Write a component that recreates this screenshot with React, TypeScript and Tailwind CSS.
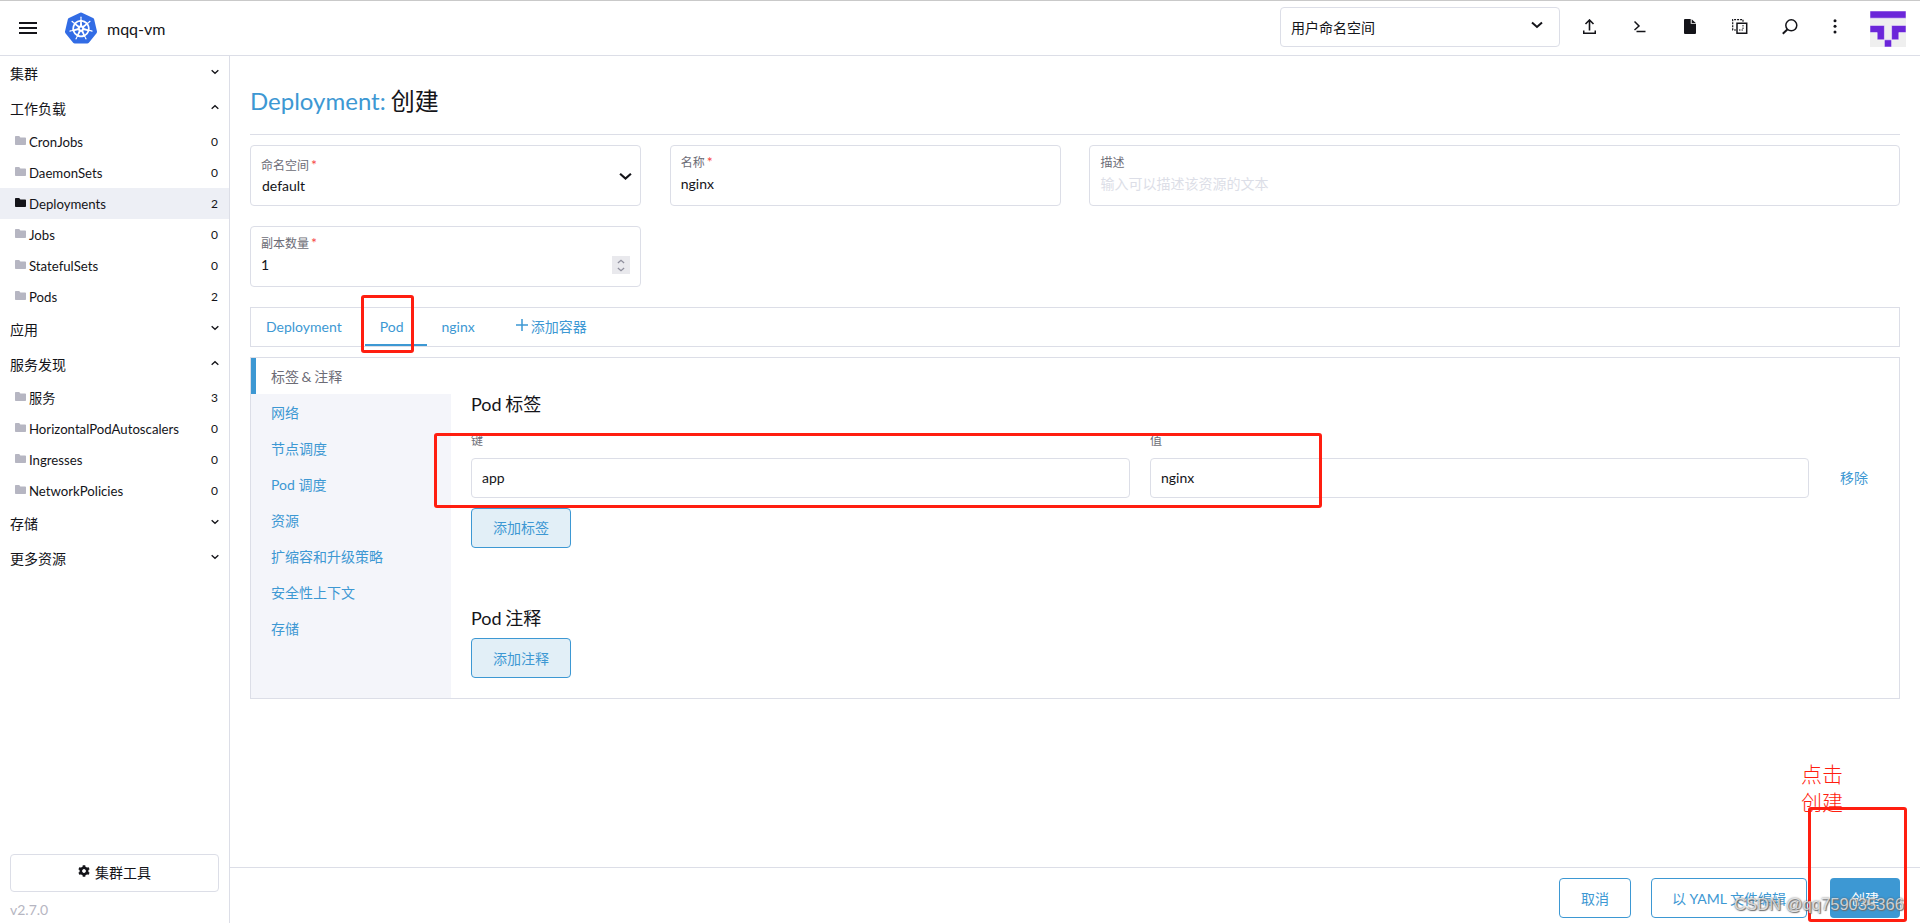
import { SiKubernetes } from "react-icons/si";

type NavItem = { label: string; count: number; active?: boolean };
type NavGroup = { label: string; items?: NavItem[] };

const groups: NavGroup[] = [
  { label: "集群" },
  {
    label: "工作负载",
    items: [
      { label: "CronJobs", count: 0 },
      { label: "DaemonSets", count: 0 },
      { label: "Deployments", count: 2, active: true },
      { label: "Jobs", count: 0 },
      { label: "StatefulSets", count: 0 },
      { label: "Pods", count: 2 },
    ],
  },
  { label: "应用" },
  {
    label: "服务发现",
    items: [
      { label: "服务", count: 3 },
      { label: "HorizontalPodAutoscalers", count: 0 },
      { label: "Ingresses", count: 0 },
      { label: "NetworkPolicies", count: 0 },
    ],
  },
  { label: "存储" },
  { label: "更多资源" },
];

const sideTabs = ["网络", "节点调度", "Pod 调度", "资源", "扩缩容和升级策略", "安全性上下文", "存储"];

function Chevron({ up, className }: { up?: boolean; className: string }) {
  return (
    <svg viewBox="0 0 12 8" className={className} fill="none" stroke="currentColor" strokeWidth="2">
      <path d={up ? "M1 6.5 6 2l5 4.5" : "M1 1.5 6 6l5-4.5"} />
    </svg>
  );
}

function Folder({ className }: { className: string }) {
  return (
    <svg viewBox="0 0 11 9" className={className} fill="currentColor">
      <path d="M.8 0h3.4l1.2 1.4h4.8q.8 0 .8.8v6q0 .8-.8.8H.8Q0 9 0 8.200V.8Q0 0 .8 0Z" />
    </svg>
  );
}

function Avatar() {
  return (
    <svg width="36" height="36" viewBox="0 0 36 36">
      <path fill="#efefef" d="M0 0h36v36H0z" />
      <path
        fill="#6b26d9"
        stroke="#fff"
        strokeWidth=".5"
        d="M0 0h36v7.200H0zM0 14.400h14.400v14.400H7.200v-7.200H0zM21.600 14.400H36v7.200h-7.200v7.200h-7.200zM14.400 28.800h7.200V36h-7.200z"
      />
    </svg>
  );
}

function Header() {
  return (
    <header className="flex h-14 shrink-0 border-b border-[#dcdee7] border-t border-t-[#c9c9c9]">
      <div className="mt-[21px] ml-[19px] flex h-3 w-[18px] flex-col justify-between">
        <div className="h-0.5 bg-[#141419]" />
        <div className="h-0.5 bg-[#141419]" />
        <div className="h-0.5 bg-[#141419]" />
      </div>
      <SiKubernetes className="mt-[11px] ml-7 h-8 w-8 text-[#326ce5]" />
      <div className="mt-4 ml-2.5 text-base leading-6">mqq-vm</div>

      <div className="mt-1.5 mr-[23px] ml-auto flex h-10 w-[280px] justify-between rounded border border-[#dcdee7] pr-4 pl-2.5">
        <span className="mt-[10px] leading-5">用户命名空间</span>
        <Chevron className="mt-[13px] h-[8px] w-[12px]" />
      </div>
      <div className="flex pt-[18px]">
        <svg width="13" height="15" viewBox="0 0 13 15" fill="none" stroke="currentColor" strokeWidth="1.6">
          <path d="M6.500 11.500V1M2.500 5l4-4 4 4" />
          <path d="M.7 11.500v2.700h11.600v-2.700" />
        </svg>
        <svg className="ml-[38px]" width="12" height="15" viewBox="0 0 12 15" fill="none" stroke="currentColor" strokeWidth="1.500">
          <path d="M.5 2.500 5 7 .5 11M2.500 12.400h9" />
        </svg>
        <svg className="ml-[38px]" width="12" height="15" viewBox="0 0 12 15">
          <path fill="currentColor" d="M1 0h5.700v4.700H12V14q0 1-1 1H1q-1 0-1-1V1q0-1 1-1ZM7.700.2 11.800 4H7.700z" />
        </svg>
        <svg className="ml-[36px]" width="16" height="15" viewBox="0 0 16 15" fill="none" stroke="currentColor">
          <path d="M4 11H.7V.7H11V3.500" strokeWidth="1.200" strokeDasharray="2 1" />
          <path d="M5 4.200h9.700v10H5z" strokeWidth="1.500" />
          <path d="M7 11h4V6" strokeDasharray="1.500 1" />
        </svg>
        <svg className="ml-[34px]" width="16" height="16" viewBox="0 0 16 16" fill="none" stroke="currentColor">
          <circle cx="9.300" cy="6.300" r="5.500" strokeWidth="1.500" />
          <path d="M5.300 10.500.8 14.700" strokeWidth="2" />
        </svg>
        <svg className="ml-[35px]" width="4" height="15" viewBox="0 0 4 15" fill="currentColor">
          <circle cx="2" cy="1.700" r="1.500" />
          <circle cx="2" cy="7.200" r="1.500" />
          <circle cx="2" cy="13" r="1.500" />
        </svg>
      </div>
      <div className="mt-2.5 mr-[14px] ml-[33px]">
        <Avatar />
      </div>
    </header>
  );
}

function Sidebar() {
  return (
    <nav className="flex w-[230px] shrink-0 flex-col border-r border-[#dcdee7]">
      {groups.map((g) => (
        <div key={g.label}>
          <div className="flex h-[35px] items-center justify-between pr-2.5 pl-2.5">
            <span className="leading-5">{g.label}</span>
            <Chevron up={!!g.items} className="mb-[3px] h-[6px] w-2" />
          </div>
          {g.items?.map((item) => (
            <div
              key={item.label}
              className={item.active ? "flex h-[31px] items-center bg-[#edeff5] pr-[11px] pl-[15px]" : "flex h-[31px] items-center pr-[11px] pl-[15px]"}
            >
              <Folder className={item.active ? "mb-0.5 h-[9px] w-[11px]" : "mb-0.5 h-[9px] w-[11px] text-[#b6b6c2]"} />
              <span className="ml-[3px] text-[13.200px] leading-5">{item.label}</span>
              <span className="mt-px ml-auto text-[12px] leading-5">{item.count}</span>
            </div>
          ))}
        </div>
      ))}
      <div className="mx-2.5 mt-auto flex h-[38px] items-center justify-center rounded border border-[#dcdee7]">
        <svg className="mr-[5px] mb-1" width="12" height="12" viewBox="-6 -6 12 12" fill="none" stroke="currentColor">
          <circle r="3.200" strokeWidth="2.600" />
          <path d="M0-5.800v2M0 5.800v-2M-5-2.900l1.700 1M5 2.900l-1.700-1M-5 2.900l1.700-1M5-2.900l-1.700 1" strokeWidth="2.600" />
        </svg>
        <span className="leading-5">集群工具</span>
      </div>
      <div className="mt-2 mb-[3px] ml-2.5 leading-5 text-[#b6b6c2]">v2.7.0</div>
    </nav>
  );
}

function FieldLabel({ text, required }: { text: string; required?: boolean }) {
  return (
    <div className="text-xs leading-4 text-[#6c6c76]">
      {text}
      {required && <span className="ml-0.5 text-sm leading-none text-[#f64747]">*</span>}
    </div>
  );
}

function Form() {
  return (
    <div className="grid grid-cols-12 gap-x-[28.875px] gap-y-5">
      <div className="col-span-3 flex h-[61px] items-center justify-between rounded border border-[#dcdee7] pr-2 pl-2.5">
        <div className="pt-0.5">
          <FieldLabel text="命名空间" required />
          <div className="mt-0.5 ml-px leading-5">default</div>
        </div>
        <Chevron className="mt-px h-[9px] w-[13px]" />
      </div>
      <div className="col-span-3 h-[61px] rounded border border-[#dcdee7] px-2.5 pt-[9px]">
        <FieldLabel text="名称" required />
        <div className="mt-[3px] leading-5">nginx</div>
      </div>
      <div className="col-span-6 h-[61px] rounded border border-[#dcdee7] px-2.5 pt-[9px]">
        <FieldLabel text="描述" />
        <div className="mt-[3px] leading-5 text-[#dcdee7]">输入可以描述该资源的文本</div>
      </div>
      <div className="col-span-3 flex h-[61px] justify-between rounded border border-[#dcdee7] pr-2.5 pl-2.5">
        <div className="pt-[9px]">
          <FieldLabel text="副本数量" required />
          <div className="mt-[3px] leading-5">1</div>
        </div>
        <div className="mt-[29px] flex h-[18px] w-[18px] flex-col items-center justify-center gap-[3px] bg-[#e9e9ed] text-[#8f8f9d]">
          <Chevron up className="h-[5px] w-2" />
          <Chevron className="h-[5px] w-2" />
        </div>
      </div>
    </div>
  );
}

function Tabs() {
  return (
    <div className="mt-5 flex h-10 border border-[#dcdee7] leading-5 text-[#3d98d3]">
      <div className="pt-[9px] pr-[23px] pl-[15px]">Deployment</div>
      <div className="border-b-2 border-[#3d98d3] pt-[9px] pr-[23px] pl-[15px]">Pod</div>
      <div className="pt-[9px] pr-[23px] pl-[15px]">nginx</div>
      <div className="flex pt-[9px] pl-[18px]">
        <svg className="mt-0.5 mr-[3px]" width="12" height="12" viewBox="0 0 12 12" stroke="currentColor" strokeWidth="1.500">
          <path d="M6 0v12M0 6h12" />
        </svg>
        添加容器
      </div>
    </div>
  );
}

function PodPanel() {
  return (
    <div className="mt-2.5 flex h-[342px] border border-[#dcdee7]">
      <div className="w-[200px] bg-[#f4f5fa] text-[#3d98d3]">
        <div className="flex h-9 items-center border-l-[5px] border-[#3d98d3] bg-white pt-0.5 pl-[15px] text-[#6c6c76] [word-spacing:-1px]">
          标签 & 注释
        </div>
        {sideTabs.map((t) => (
          <div key={t} className="flex h-9 items-center pt-0.5 pl-5">
            {t}
          </div>
        ))}
      </div>
      <div className="flex-1 pl-5">
        <h3 className="mt-[34px] text-lg leading-6 [word-spacing:-1px]">Pod 标签</h3>
        <div className="mt-[17px] flex">
          <div className="w-[659px]">
            <FieldLabel text="键" />
            <div className="mt-[9px] flex h-10 items-center rounded border border-[#dcdee7] pl-2.5">app</div>
          </div>
          <div className="ml-5 w-[659px]">
            <FieldLabel text="值" />
            <div className="mt-[9px] flex h-10 items-center rounded border border-[#dcdee7] pl-2.5">nginx</div>
          </div>
          <div className="mt-[25px] ml-[31px] flex h-10 items-center text-[#3d98d3]">移除</div>
        </div>
        <button className="mt-2.5 block h-10 w-[100px] rounded border border-[#3d98d3] bg-[#e2eff7] text-[#3d98d3]">添加标签</button>
        <h3 className="mt-[58px] text-lg leading-6 [word-spacing:-1px]">Pod 注释</h3>
        <button className="mt-2 block h-10 w-[100px] rounded border border-[#3d98d3] bg-[#e2eff7] pt-px text-[#3d98d3]">添加注释</button>
      </div>
    </div>
  );
}

export default function App() {
  return (
    <div className="relative flex h-[923px] w-[1920px] flex-col overflow-hidden bg-white font-['Lato','Noto_Sans_CJK_SC',sans-serif] text-sm text-[#141419]">
      <Header />
      <div className="flex min-h-0 flex-1">
        <Sidebar />
        <main className="flex flex-1 flex-col">
          <div className="flex-1 px-5">
            <h1 className="mt-[29px] h-[49px] text-2xl leading-8 [word-spacing:-1px]">
              <span className="text-[#3d98d3]">Deployment:</span> 创建
            </h1>
            <hr className="mb-2.5 border-[#dcdee7]" />
            <Form />
            <Tabs />
            <PodPanel />
          </div>
          <footer className="flex h-14 justify-end border-t border-[#dcdee7] pt-2.5 pr-5">
            <button className="h-10 w-[72px] rounded border border-[#3d98d3] pt-0.5 text-[#3d98d3]">取消</button>
            <button className="ml-5 h-10 w-[156px] rounded border border-[#3d98d3] pt-0.5 text-[#3d98d3]">以 YAML 文件编辑</button>
            <button className="ml-[23px] h-10 w-[70px] rounded bg-[#3d98d3] pt-0.5 text-white">创建</button>
          </footer>
        </main>
      </div>

      {/* annotations drawn over the page */}
      <div className="absolute top-[295px] left-[361px] h-[58px] w-[53px] rounded-[3px] border-3 border-[#ff1e10]" />
      <div className="absolute top-[433px] left-[434px] h-[75px] w-[888px] rounded-[3px] border-3 border-[#ff1e10]" />
      <div className="absolute top-[760px] left-[1801px] text-[21px] leading-[27.5px] font-light text-[#ff1e10]">
        点击
        <br />
        创建
      </div>
      <div className="absolute top-[807px] left-[1808px] h-[115px] w-[99px] rounded-[3px] border-3 border-[#ff1e10]" />
      <div className="absolute top-[893px] left-[1734px] font-['Liberation_Sans',sans-serif] text-[16.600px] leading-6 whitespace-nowrap text-white/70 [text-shadow:0_0_2px_#555,1px_1px_1px_#777]">
        CSDN @qq759035366
      </div>
    </div>
  );
}
